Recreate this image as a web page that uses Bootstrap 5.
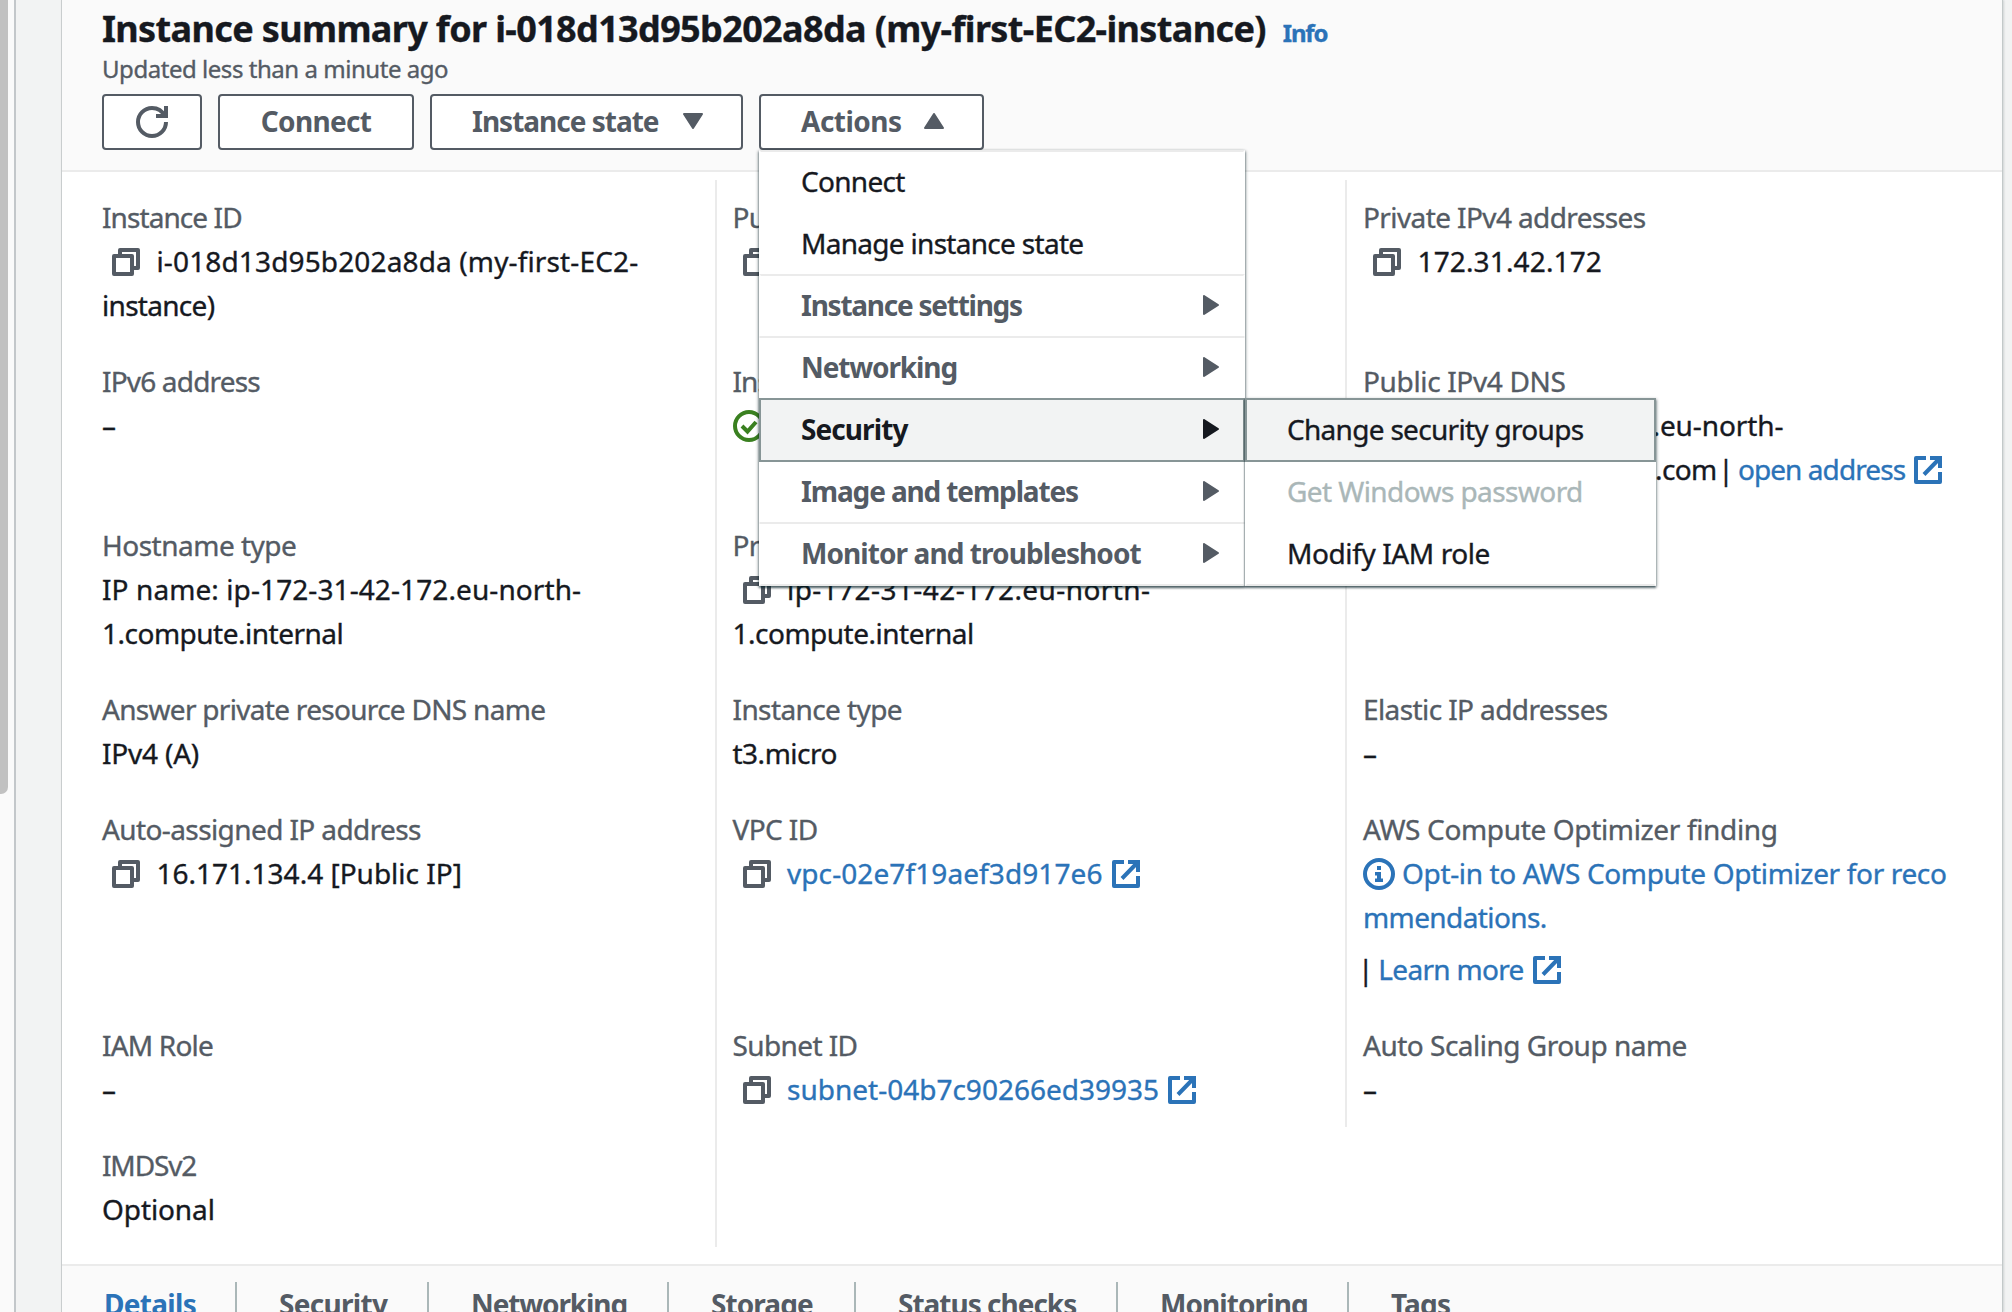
<!DOCTYPE html>
<html lang="en">
<head>
<meta charset="utf-8">
<title>Instance summary</title>
<link href="https://cdn.jsdelivr.net/npm/bootstrap@5.3.0/dist/css/bootstrap.min.css" rel="stylesheet">
<style>
  :root { --ink: #16191f; --soft: #545b64; --line: #ebebeb; --blue: #2b73b8; }
  body { font-family: "Noto Sans", "Open Sans", sans-serif; font-size: 28px; line-height: 44px; color: var(--ink); background: #f2f3f3; height: 1312px; overflow: hidden; white-space: nowrap; letter-spacing: -.6px; -webkit-text-stroke: .35px currentColor; }
  a { color: var(--blue); text-decoration: none; }
  svg { flex: none; fill: none; stroke: currentColor; }

  .scroll-strip { width: 16px; background: #fafafa; border-right: 2px solid #c3c7ca; }
  .scroll-thumb { width: 8px; height: 794px; background: #c1c1c1; border-bottom-right-radius: 7px; }
  .panel { margin-left: 45px; width: 1942px; background: #fff; border-left: 1px solid #c9cdce; border-right: 1px solid #c3c9c9; box-shadow: 1px 0 2px rgba(0,28,36,.15); }

  .panel-head { height: 172px; background: #fafafa; border-bottom: 2px solid var(--line); padding: 7px 0 0 40px; }
  .title-row { height: 44px; }
  .panel-title { font-size: 36px; line-height: 44px; font-weight: 700; letter-spacing: -.64px; }
  .info-link { font-size: 24px; font-weight: 700; letter-spacing: -1.2px; margin-left: 17px; }
  .updated { font-size: 24px; line-height: 32px; color: var(--soft); letter-spacing: -.46px; margin-top: 2px; }
  .toolbar { margin-top: 9px; gap: 16px; }
  .tool-btn { height: 56px; border: 2px solid var(--soft); border-radius: 4px; background: #fff; color: var(--soft); font-size: 28px; line-height: 44px; font-weight: 700; padding: 0 38px 2px 40px; -webkit-text-stroke: 0; }
  .w-refresh { width: 100px; padding: 0; } .w-connect { width: 196px; padding-left: 38px; } .w-state { width: 313px; } .w-actions { width: 225px; }

  .menu { position: absolute; z-index: 10; background: #fff; box-shadow: 0 2px 2px rgba(0,28,36,.5), 1px 1px 3px rgba(0,28,36,.3), -1px 1px 3px rgba(0,28,36,.3); }
  .menu-main { top: 100%; left: 0; width: 486px; }
  .menu-sub { top: -2px; left: 484px; width: 411px; z-index: 20; box-shadow: 0 2px 2px rgba(0,28,36,.5), 1px 1px 3px rgba(0,28,36,.3), -1px 1px 1px rgba(0,28,36,.18); -webkit-text-stroke: .35px currentColor; }
  .entry { position: relative; height: 64px; border: 2px solid transparent; padding: 0 24px 2px 40px; color: var(--ink); font-weight: 400; }
  .entry + .entry { margin-top: -2px; }
  .entry:first-child { border-top-color: var(--line); }
  .entry.group { border-top-color: var(--line); border-bottom-color: var(--line); color: var(--soft); font-weight: 700; -webkit-text-stroke: 0; }
  .entry:last-child { border-bottom-color: var(--line); }
  .entry.picked { background: #f2f3f3; border-color: #879596; z-index: 5; }
  .entry.group.picked { border-color: #879596; color: var(--ink); }
  .entry.off { color: #aab7b8; }

  .panel-body { padding: 8px 0 16px; height: 1094px; border-bottom: 2px solid var(--line); }
  .stack { display: flex; flex-direction: column; gap: 32px; padding: 15px 0 16px; }
  .stack-1 { width: 655px; padding-left: 40px; border-right: 2px solid var(--line); }
  .stack-2 { width: 630px; padding-left: 15.5px; border-right: 2px solid var(--line); }
  .stack-3 { padding-left: 16px; }
  .pair { height: 88px; } .pair.tall { height: 132px; } .pair.taller { height: 184px; }
  .key { color: var(--soft); }
  .copy { margin: 0 16.500px 0 10px; vertical-align: -4px; color: var(--soft); }
  .ext { vertical-align: -4px; margin-left: 9px; }
  .disc { vertical-align: -6px; }
  .pre-1 { display: inline-block; width: 235px; } .pre-2 { display: inline-block; width: 292px; }
  .bar-a { margin: 0 -2px 0 -5px; } .bar-b { margin: 0 -1px 0 -5px; }
  .opt { margin-left: 7px; }
  .learn { line-height: 52px; padding-top: 4px; }

  .tabs { height: 46px; background: #fafafa; padding-top: 16px; overflow: hidden; }
  .tab-cell { height: 60px; line-height: 44px; font-weight: 700; color: var(--soft); border-right: 2px solid #aab7b8; padding-left: 42px; -webkit-text-stroke: 0; }
  .tab-cell:last-child { border: 0; } .tab-cell.now { color: var(--blue); }
  .c1 { width: 175px; } .c2 { width: 192px; } .c3 { width: 240px; } .c4 { width: 187px; } .c5 { width: 262px; } .c6 { width: 231px; }

  /* tracking steps */
  .k-p5 { letter-spacing: .42px; } .k-p2 { letter-spacing: .14px; } .k-p1 { letter-spacing: .09px; } .k0 { letter-spacing: 0; } .k1 { letter-spacing: -.1px; } .k2 { letter-spacing: -.2px; }
  .k3 { letter-spacing: -.35px; } .k4 { letter-spacing: -.4px; } .k5 { letter-spacing: -.5px; } .k6 { letter-spacing: -.58px; } .k7 { letter-spacing: -.7px; } .k8 { letter-spacing: -.82px; }
  .k9 { letter-spacing: -.92px; } .k10 { letter-spacing: -1px; } .k11 { letter-spacing: -1.13px; } .k13 { letter-spacing: -1.25px; }
</style>
</head>
<body class="m-0">
<svg width="0" height="0" class="position-absolute">
  <symbol id="i-copy" viewBox="0 0 28 28"><rect x="2" y="8" width="18" height="18" stroke-width="4" stroke-linejoin="round"/><path d="M8 6V2h18v18h-5" stroke-width="4" stroke-linejoin="round"/></symbol>
  <symbol id="i-ext" viewBox="0 0 28 28"><path d="M12 2H2v24h24V16" stroke-width="4" stroke-linejoin="round"/><path d="M16 2h10v10M26 2L10 18.500" stroke-width="4"/></symbol>
  <symbol id="i-right" viewBox="0 0 16 20"><path d="M1 1v18L15 10z" fill="currentColor" stroke-width="2" stroke-linejoin="round"/></symbol>
</svg>
<div class="d-flex h-100">
  <div class="scroll-strip"><div class="scroll-thumb"></div></div>
  <main class="panel">
    <header class="panel-head">
      <div class="title-row d-flex align-items-baseline"><h1 class="panel-title m-0">Instance summary for i-018d13d95b202a8da (my-first-EC2-instance)</h1><a href="#" class="info-link">Info</a></div>
      <div class="updated">Updated less than a minute ago</div>
      <div class="toolbar d-flex">
        <button class="tool-btn w-refresh d-flex align-items-center justify-content-center"><svg width="32" height="32" viewBox="0 0 16 16" stroke-width="2"><path d="M15 8c0 3.870-3.130 7-7 7s-7-3.130-7-7 3.130-7 7-7c2.790 0 5.200 1.630 6.330 4"/><path d="M10 5h5V0"/></svg></button>
        <button class="tool-btn w-connect k7">Connect</button>
        <button class="tool-btn w-state d-flex align-items-center justify-content-between k10">Instance state<svg width="20" height="16" viewBox="0 0 20 16"><path d="M1 1h18L10 15z" fill="currentColor" stroke-width="2" stroke-linejoin="round"/></svg></button>
        <div class="position-relative">
          <button class="tool-btn w-actions d-flex align-items-center justify-content-between k5">Actions<svg width="20" height="16" viewBox="0 0 20 16"><path d="M1 15h18L10 1z" fill="currentColor" stroke-width="2" stroke-linejoin="round"/></svg></button>
          <div class="menu menu-main">
            <div class="entry d-flex align-items-center k7">Connect</div>
            <div class="entry d-flex align-items-center k7">Manage instance state</div>
            <div class="entry group d-flex align-items-center justify-content-between k13">Instance settings<svg width="16" height="20"><use href="#i-right"/></svg></div>
            <div class="entry group d-flex align-items-center justify-content-between k11">Networking<svg width="16" height="20"><use href="#i-right"/></svg></div>
            <div class="entry group picked d-flex align-items-center justify-content-between k9">Security<svg width="16" height="20"><use href="#i-right"/></svg>
              <div class="menu menu-sub">
                <div class="entry picked d-flex align-items-center k7">Change security groups</div>
                <div class="entry off d-flex align-items-center k6">Get Windows password</div>
                <div class="entry d-flex align-items-center k4">Modify IAM role</div>
              </div>
            </div>
            <div class="entry group d-flex align-items-center justify-content-between k11">Image and templates<svg width="16" height="20"><use href="#i-right"/></svg></div>
            <div class="entry group d-flex align-items-center justify-content-between k9">Monitor and troubleshoot<svg width="16" height="20"><use href="#i-right"/></svg></div>
          </div>
        </div>
      </div>
    </header>

    <section class="panel-body d-flex align-items-start">
      <div class="stack stack-1">
        <div class="pair tall"><div class="key k9">Instance ID</div><div class="k-p2"><svg class="copy" width="28" height="28"><use href="#i-copy"/></svg>i-018d13d95b202a8da (my-first-EC2-</div><div class="k7">instance)</div></div>
        <div class="pair tall"><div class="key k8">IPv6 address</div><div>–</div></div>
        <div class="pair tall"><div class="key k5">Hostname type</div><div class="k-p1">IP name: ip-172-31-42-172.eu-north-</div><div class="k5">1.compute.internal</div></div>
        <div class="pair"><div class="key k7">Answer private resource DNS name</div><div class="k2">IPv4 (A)</div></div>
        <div class="pair taller"><div class="key">Auto-assigned IP address</div><div class="k0"><svg class="copy" width="28" height="28"><use href="#i-copy"/></svg>16.171.134.4 [Public IP]</div></div>
        <div class="pair"><div class="key k8">IAM Role</div><div>–</div></div>
        <div class="pair"><div class="key k11">IMDSv2</div><div class="k1">Optional</div></div>
      </div>
      <div class="stack stack-2">
        <div class="pair tall"><div class="key">Public IPv4 address</div><div><svg class="copy" width="28" height="28"><use href="#i-copy"/></svg>16.171.134.4 | <a href="#">open address</a></div></div>
        <div class="pair tall"><div class="key k9">Instance state</div><div><svg class="disc" width="32" height="32" viewBox="0 0 32 32" stroke-width="4" color="#3a8020"><circle cx="16" cy="16" r="14"/><path d="M9 16l5.500 5.500L23 12"/></svg> Running</div></div>
        <div class="pair tall"><div class="key">Private IP DNS name (IPv4 only)</div><div class="k-p5"><svg class="copy" width="28" height="28"><use href="#i-copy"/></svg>ip-172-31-42-172.eu-north-</div><div class="k5">1.compute.internal</div></div>
        <div class="pair"><div class="key">Instance type</div><div class="k5">t3.micro</div></div>
        <div class="pair taller"><div class="key">VPC ID</div><div class="k-p1"><svg class="copy" width="28" height="28"><use href="#i-copy"/></svg><a href="#">vpc-02e7f19aef3d917e6<svg class="ext" width="28" height="28"><use href="#i-ext"/></svg></a></div></div>
        <div class="pair"><div class="key">Subnet ID</div><div class="k0"><svg class="copy" width="28" height="28"><use href="#i-copy"/></svg><a href="#">subnet-04b7c90266ed39935<svg class="ext" width="28" height="28"><use href="#i-ext"/></svg></a></div></div>
      </div>
      <div class="stack stack-3">
        <div class="pair tall"><div class="key">Private IPv4 addresses</div><div class="k-p2"><svg class="copy" width="28" height="28"><use href="#i-copy"/></svg>172.31.42.172</div></div>
        <div class="pair tall"><div class="key k3">Public IPv4 DNS</div><div class="k1"><svg class="copy" width="28" height="28"><use href="#i-copy"/></svg><span class="pre-1">ec2-16-171-134-4</span>.eu-north-</div><div><span class="pre-2">1.compute.amazonaws</span>.com <span class="bar-a">|</span> <a href="#" class="k9">open address<svg class="ext" width="28" height="28"><use href="#i-ext"/></svg></a></div></div>
        <div class="pair tall"></div>
        <div class="pair"><div class="key">Elastic IP addresses</div><div>–</div></div>
        <div class="pair taller"><div class="key k3">AWS Compute Optimizer finding</div><a href="#" class="d-block"><span class="k3"><svg class="disc" width="32" height="32" viewBox="0 0 32 32"><circle cx="16" cy="16" r="14" stroke-width="4"/><path d="M14 8h4v4h-4zM12 14h6v6.500h2V24h-8v-3.500h2v-3h-2z" fill="currentColor" stroke="none"/></svg><span class="opt">Opt-in to AWS Compute Optimizer for reco</span></span><br>mmendations.</a><div class="learn k7"><span class="bar-b">|</span> <a href="#">Learn more<svg class="ext" width="28" height="28"><use href="#i-ext"/></svg></a></div></div>
        <div class="pair"><div class="key k5">Auto Scaling Group name</div><div>–</div></div>
      </div>
    </section>

    <nav class="tabs d-flex">
      <div class="tab-cell now c1 k7">Details</div>
      <div class="tab-cell c2 k7">Security</div>
      <div class="tab-cell c3 k11">Networking</div>
      <div class="tab-cell c4 k9">Storage</div>
      <div class="tab-cell c5 k10">Status checks</div>
      <div class="tab-cell c6 k9">Monitoring</div>
      <div class="tab-cell k8">Tags</div>
    </nav>
  </main>
</div>
<script src="https://cdn.jsdelivr.net/npm/bootstrap@5.3.0/dist/js/bootstrap.bundle.min.js"></script>
</body>
</html>
